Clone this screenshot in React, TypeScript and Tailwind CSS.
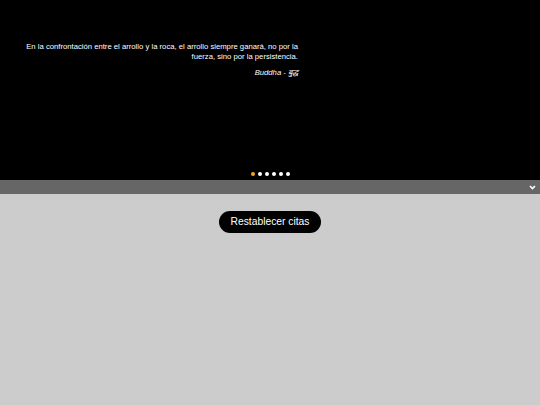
import React from 'react';

const DOTS = [0, 1, 2, 3, 4, 5];

export default function App() {
    return (
        <div className="w-[540px] h-[405px] bg-[#cccccc] flex flex-col font-['Liberation_Sans',Arial,sans-serif]">
            <div className="h-[180px] bg-black flex flex-col">
                <div className="pt-[42px] pl-[20px] w-[298px] text-right text-white">
                    <p className="text-[7.7px] leading-[10px]">
                        En la confrontación entre el arrollo y la roca, el arrollo siempre ganará, no por la fuerza, sino por la persistencia.
                    </p>
                    <p className="mt-[6px] text-[7.7px] leading-[10px] italic">Buddha - बुद्ध</p>
                </div>
                <div className="mt-auto mb-[4px] flex justify-center gap-[3px] pl-[1px]">
                    {DOTS.map((i) => (
                        <span
                            key={i}
                            className={`w-[4px] h-[4px] rounded-full ${i === 0 ? 'bg-[#f5a623]' : 'bg-white'}`}
                        />
                    ))}
                </div>
            </div>
            <div className="h-[14px] bg-[#666666] flex items-center justify-end pr-[4px]">
                <svg width="7" height="5" viewBox="0 0 7 5" fill="none">
                    <path d="M1 1l2.5 2.5L6 1" stroke="white" strokeWidth="1.6" />
                </svg>
            </div>
            <div className="flex justify-center pt-[17px]">
                <button className="h-[22px] w-[102px] rounded-full bg-black text-white text-[10.3px]">
                    Restablecer citas
                </button>
            </div>
        </div>
    );
}
